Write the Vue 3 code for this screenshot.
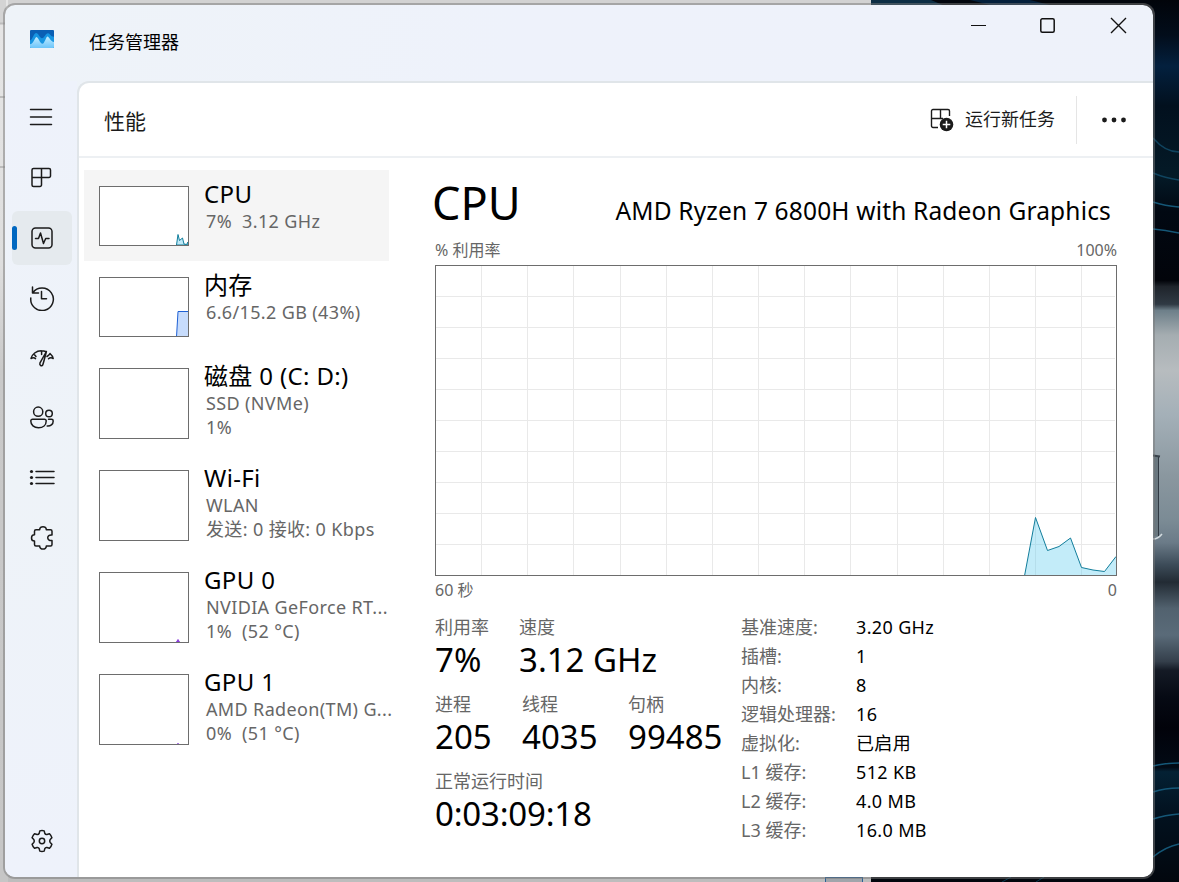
<script setup>
const devices = [
  { name: 'CPU', lines: ['7%  3.12 GHz'], kind: 'cpu', active: true },
  { name: '内存', lines: ['6.6/15.2 GB (43%)'], kind: 'mem' },
  { name: '磁盘 0 (C: D:)', lines: ['SSD (NVMe)', '1%'], tall: true },
  { name: 'Wi-Fi', lines: ['WLAN', '发送: 0 接收: 0 Kbps'], tall: true },
  { name: 'GPU 0', lines: ['NVIDIA GeForce RT...', '1%  (52 °C)'], kind: 'gpu', tall: true },
  { name: 'GPU 1', lines: ['AMD Radeon(TM) G...', '0%  (51 °C)'], kind: 'idle', tall: true },
]
const metricRows = [
  [{ label: '利用率', value: '7%', cls: 'w84' }, { label: '速度', value: '3.12 GHz', cls: 'auto' }],
  [{ label: '进程', value: '205', cls: 'w87' }, { label: '线程', value: '4035', cls: 'w106' }, { label: '句柄', value: '99485', cls: 'auto' }],
  [{ label: '正常运行时间', value: '0:03:09:18', cls: 'uptime' }],
]
const details = [
  ['基准速度:', '3.20 GHz'],
  ['插槽:', '1'],
  ['内核:', '8'],
  ['逻辑处理器:', '16'],
  ['虚拟化:', '已启用'],
  ['L1 缓存:', '512 KB'],
  ['L2 缓存:', '4.0 MB'],
  ['L3 缓存:', '16.0 MB'],
]
const gridX = Array.from({ length: 14 }, (_, i) => Math.round((i + 1) * 46.15) + 0.5)
const gridY = Array.from({ length: 9 }, (_, i) => (i + 1) * 31 + 0.5)
</script>

<template>
  <div class="desktop">
    <svg class="wallpaper" width="1179" height="882" viewBox="0 0 1179 882">
      <defs>
        <linearGradient id="side" x1="0" y1="0" x2="0" y2="1">
          <stop offset="0" stop-color="#01040a" />
          <stop offset=".04" stop-color="#020d1b" />
          <stop offset=".075" stop-color="#03203e" />
          <stop offset=".12" stop-color="#02101e" />
          <stop offset=".2" stop-color="#041a27" />
          <stop offset=".24" stop-color="#010812" />
          <stop offset=".318" stop-color="#02040a" />
          <stop offset=".325" stop-color="#1f242b" />
          <stop offset=".345" stop-color="#303a44" />
          <stop offset=".352" stop-color="#6d7f89" />
          <stop offset=".38" stop-color="#a5adb1" />
          <stop offset=".42" stop-color="#b7bcbf" />
          <stop offset=".47" stop-color="#a4b0b8" />
          <stop offset=".54" stop-color="#8a979f" />
          <stop offset=".59" stop-color="#7b8b95" />
          <stop offset=".615" stop-color="#6b7b88" />
          <stop offset=".64" stop-color="#3d4c59" />
          <stop offset=".66" stop-color="#222b34" />
          <stop offset=".69" stop-color="#52626f" />
          <stop offset=".72" stop-color="#5a6b79" />
          <stop offset=".75" stop-color="#343f4b" />
          <stop offset=".76" stop-color="#141a25" />
          <stop offset=".79" stop-color="#060a14" />
          <stop offset=".825" stop-color="#01020a" />
          <stop offset=".87" stop-color="#020a15" />
          <stop offset=".875" stop-color="#042134" />
          <stop offset=".92" stop-color="#021220" />
          <stop offset="1" stop-color="#02070e" />
        </linearGradient>
        <linearGradient id="left" x1="0" y1="0" x2="0" y2="1">
          <stop offset="0" stop-color="#e6e6e6" />
          <stop offset=".3" stop-color="#dedede" />
          <stop offset=".42" stop-color="#c9c9c9" />
          <stop offset="1" stop-color="#c6c6c6" />
        </linearGradient>
      </defs>
      <rect width="1179" height="882" fill="#bdbdbd" />
      <rect width="871" height="10" fill="#d2d2d2" />
      <rect width="8" height="882" fill="url(#left)" />
      <rect width="6" height="23" fill="#d4d4d4" />
      <path d="M0 23.5H6M0 97H6M0 167H6" stroke="#bcbcbc" stroke-width="2" />
      <rect x="871" width="308" height="882" fill="#02060d" />
      <path d="M871 0h60l14 6h-74z" fill="#0d2e44" />
      <path d="M970 0l20 5h60l-20-5z" fill="#04203b" />
      <rect x="1150" width="29" height="882" fill="url(#side)" />
      <g fill="none" stroke="#155777" stroke-width="1.4">
        <path d="M1153 138q12 14 26 14" opacity=".7" />
        <path d="M1153 173q12 5 26 7" opacity=".7" />
        <path d="M1153 202q12 4 26 5M1153 229q12 1 26 4" />
        <path d="M1153 766q12-3 26-3M1153 792q12-4 26-4M1153 819q12-4 26-5M1153 857q12-10 26-13" />
      </g>
      <rect x="1154" y="456" width="4" height="80" fill="#69777f" />
      <path d="M1158.500 456v80" stroke="#303943" />
      <path d="M1153 455.500l7 1" stroke="#3a444d" stroke-width="2" />
      <path d="M1153 539q5 0 9-5" fill="none" stroke="#d4dce0" stroke-width="1.500" />
      <rect x="825.500" y="877.500" width="37" height="8" fill="#a0a5ab" stroke="#2a6096" />
      <path d="M1002 882l9-5M1036 882l8-5" stroke="#0a3a50" />
    </svg>

    <div class="window">
      <header class="titlebar">
        <svg class="logo" width="24" height="18" viewBox="0 0 24 18">
          <defs>
            <linearGradient id="lg" x1="0" y1="0" x2="0" y2="1">
              <stop offset="0" stop-color="#c2ecff" />
              <stop offset="1" stop-color="#6cc5fa" />
            </linearGradient>
          </defs>
          <rect width="24" height="18" rx="1" fill="#0a5fb4" />
          <path d="M0 10.500C2.500 10 3.500 3.500 6 3C8.500 3 9.500 8 12 8.300C14.500 8 15.500 3.200 18 3.200C20 3.400 20.500 6.500 24 6.800V18H0z" fill="#1795e2" />
          <path d="M0 14.300C3.300 14.300 4.500 8 6.500 7C8.500 7.500 10 13.600 12.500 13.800C14.500 13.500 15.800 7.500 17.300 6.500C19.500 7 20.500 11.500 24 12V17a1 1 0 0 1-1 1H1a1 1 0 0 1-1-1z" fill="url(#lg)" />
        </svg>
        <span class="app-name">任务管理器</span>
        <svg class="controls" width="170" height="18" viewBox="0 0 170 18" fill="none" stroke="#111">
          <path d="M7 9.500H22" stroke-width="1.200" />
          <rect x="76.800" y="2.800" width="13.400" height="13.400" rx="1.500" stroke-width="1.500" />
          <path d="M147 2l15 15M162 2l-15 15" stroke-width="1.400" />
        </svg>
      </header>

      <div class="body">
        <nav class="rail">
          <div class="nav"><svg width="26" height="26" viewBox="0 0 26 26"><path d="M1.500 4.500H22.500M1.500 12H22.500M1.500 19.500H22.500" /></svg></div>
          <div class="nav"><svg width="26" height="26" viewBox="0 0 26 26"><path d="M4.500 3.500H20a1.500 1.500 0 0 1 1.500 1.500V11a1.500 1.500 0 0 1-1.500 1.500H3M12.500 3.500V20a1.500 1.500 0 0 1-1.500 1.500H4.500A1.500 1.500 0 0 1 3 20V5A1.500 1.500 0 0 1 4.500 3.500" /></svg></div>
          <div class="nav selected"><svg width="26" height="26" viewBox="0 0 26 26"><rect x="3" y="3" width="20" height="20" rx="3.500" /><path d="M6.500 13.500H9.500L11.500 8L14.500 18.500L16.700 13.500H20" /></svg></div>
          <div class="nav"><svg width="26" height="26" viewBox="0 0 26 26"><path d="M3.500 2V8H9.500M3.800 7.700A11.300 11.300 0 1 1 1.800 13M12.500 6.500V13.700H17.500" /></svg></div>
          <div class="nav"><svg width="26" height="26" viewBox="0 0 26 26"><path d="M2 13.500C2.800 9.500 7.500 5.500 12.500 5.700C14 5.700 15.500 6 16.600 6.500M2 13.500Q4.800 12 6.500 13.600M5.500 9.700L7 11.500M12.600 6V9.500M20.500 8.500M17.400 6.500L11 17.800Q10.400 19.500 11.500 20.500Q12.700 21.400 13.700 20Q14.500 18 17.400 6.500M18 11.500Q20.300 10 21 8.500Q23.800 11 24.200 13.500Q21.500 12 19.500 13.800" /></svg></div>
          <div class="nav"><svg width="26" height="26" viewBox="0 0 26 26"><circle cx="9.200" cy="6.700" r="4.600" /><circle cx="20" cy="8.500" r="3.300" /><path d="M3.500 14.300H15.500a1.700 1.700 0 0 1 1.700 1.700C17.200 20.100 14 22.800 9.500 22.800S1.800 20.100 1.800 16A1.700 1.700 0 0 1 3.500 14.300zM19.500 14.300H22.500a1.700 1.700 0 0 1 1.700 1.700C24.200 19.400 21.500 21.300 18.200 21" /></svg></div>
          <div class="nav"><svg width="26" height="26" viewBox="0 0 26 26"><path d="M7 6.500H25M7 12.500H25M7 18.500H25" /><g fill="#1b1b1b" stroke="none"><circle cx="2.500" cy="6.500" r="1.600" /><circle cx="2.500" cy="12.500" r="1.600" /><circle cx="2.500" cy="18.500" r="1.600" /></g></svg></div>
          <div class="nav"><svg width="26" height="26" viewBox="0 0 26 26"><path d="M7 4.800H10.700C10.500 .6 17.500 .6 17.300 4.800H21.500a1.500 1.500 0 0 1 1.500 1.500V10C17.300 9.300 17.300 16.200 23 15.500V19.500a1.500 1.500 0 0 1-1.500 1.500H17.300C17.500 25.100 10.500 25.100 10.700 21H7A1.500 1.500 0 0 1 5.500 19.500V16C1.500 16 1.500 9.800 5.500 9.800V6.300A1.500 1.500 0 0 1 7 4.800z" /></svg></div>
          <div class="nav settings"><svg width="26" height="26" viewBox="0 0 26 26"><circle cx="13" cy="13" r="2.700" /><path d="M10.800 2.900Q13 2.300 15.200 2.900L15.800 5.400Q16.400 6.700 17.900 6.500L20.500 5.700Q22.300 7.500 22.900 9.700L21.200 11.500Q20.200 13 21.200 14.500L22.900 16.300Q22.300 18.500 20.500 20.300L17.900 19.500Q16.400 19.300 15.800 20.600L15.200 23.100Q13 23.700 10.800 23.100L10.200 20.600Q9.600 19.300 8.100 19.500L5.500 20.300Q3.700 18.500 3.100 16.300L4.800 14.500Q5.800 13 4.800 11.500L3.100 9.700Q3.700 7.500 5.500 5.700L8.100 6.500Q9.600 6.700 10.200 5.400z" /></svg></div>
        </nav>

        <main class="panel">
          <div class="toolbar">
            <h1>性能</h1>
            <button class="run">
              <svg width="24" height="24" viewBox="0 0 24 24">
                <path d="M8 19.500H3A1.500 1.500 0 0 1 1.500 18V3A1.500 1.500 0 0 1 3 1.500H18A1.500 1.500 0 0 1 19.500 3V8M10.500 1.500V10.500M1.500 10.500H13" fill="none" stroke="#1b1b1b" stroke-width="1.400" />
                <circle cx="16.500" cy="16.500" r="6.800" fill="#1b1b1b" />
                <path d="M16.500 12.700v7.600M12.700 16.500h7.600" stroke="#fff" stroke-width="1.500" />
              </svg>
              <span>运行新任务</span>
            </button>
            <div class="divider"></div>
            <svg class="more" width="26" height="6" viewBox="0 0 26 6"><circle cx="2.500" cy="3" r="2.400" /><circle cx="12" cy="3" r="2.400" /><circle cx="21.500" cy="3" r="2.400" /></svg>
          </div>

          <div class="content">
            <div class="devices">
              <div v-for="d in devices" :key="d.name" class="device" :class="{ active: d.active, tall: d.tall }">
                <div class="thumb">
                  <svg v-if="d.kind === 'cpu'" width="88" height="58" viewBox="0 0 88 58"><path d="M76.500 58L78 47.500L79.500 53.500L82.500 51L84 57L86.500 57.500L88 55V58z" fill="#bfe9f8" stroke="#117d9b" /></svg>
                  <svg v-else-if="d.kind === 'mem'" width="88" height="58" viewBox="0 0 88 58"><path d="M76.500 59L78 33.500H89V59z" fill="#c7dcfc" stroke="#1e60d4" /></svg>
                  <svg v-else-if="d.kind === 'gpu'" width="88" height="69" viewBox="0 0 88 69"><path d="M76.500 69L78 66.500L79.500 69z" fill="#8a3fdc" stroke="#8a3fdc" /></svg>
                  <svg v-else-if="d.kind === 'idle'" width="88" height="69" viewBox="0 0 88 69"><path d="M77 68.500h2" stroke="#8a3fdc" stroke-opacity=".7" /></svg>
                </div>
                <div class="info">
                  <div class="name">{{ d.name }}</div>
                  <div v-for="l in d.lines" :key="l" class="line">{{ l }}</div>
                </div>
              </div>
            </div>

            <section class="detail">
              <div class="heading">
                <h2>CPU</h2>
                <span class="model">AMD Ryzen 7 6800H with Radeon Graphics</span>
              </div>
              <div class="axis top"><span>% 利用率</span><span>100%</span></div>
              <svg class="chart" width="682" height="311" viewBox="0 0 682 311">
                <path v-for="x in gridX" :key="'x' + x" :d="`M${x} 1V310`" stroke="#e9e9e9" />
                <path v-for="y in gridY" :key="'y' + y" :d="`M1 ${y}H680`" stroke="#e9e9e9" />
                <path d="M589.700 310L600.500 252.500L612.500 285.500L624 281.500L635.500 273L646.500 302.500L658 305L669.500 306.500L681 291.500V310z" fill="#5bcbf0" fill-opacity=".37" />
                <path d="M589.700 310L600.500 252.500L612.500 285.500L624 281.500L635.500 273L646.500 302.500L658 305L669.500 306.500L681 291.500" fill="none" stroke="#117d9b" />
                <rect x=".5" y=".5" width="681" height="310" fill="none" stroke="#6d6d6d" />
              </svg>
              <div class="axis bottom"><span>60 秒</span><span>0</span></div>
              <div class="stats">
                <div class="metrics">
                  <div v-for="(row, i) in metricRows" :key="i" class="metric-row">
                    <div v-for="m in row" :key="m.label" class="metric" :class="m.cls">
                      <div class="label">{{ m.label }}</div>
                      <div class="value">{{ m.value }}</div>
                    </div>
                  </div>
                </div>
                <dl class="specs">
                  <template v-for="s in details" :key="s[0]"><dt>{{ s[0] }}</dt><dd>{{ s[1] }}</dd></template>
                </dl>
              </div>
            </section>
          </div>
        </main>
      </div>
    </div>
  </div>
</template>

<style>
body { margin: 0; overflow: hidden; }
</style>

<style scoped>
* { box-sizing: border-box; }
.desktop { position: relative; width: 1179px; height: 882px; overflow: hidden; padding: 3px 0 0 3px; font-family: "Noto Sans", "Noto Sans CJK SC", sans-serif; color: #000; }
.wallpaper { position: absolute; left: 0; top: 0; }
.window { position: relative; width: 1152px; height: 876px; border: 2px solid rgba(120, 120, 120, .5); border-radius: 12px; overflow: hidden; background: linear-gradient(100deg, #eef3f8, #eef2fb 40%, #eef2fa); background-clip: padding-box; display: flex; flex-direction: column; }
.titlebar { height: 76px; display: flex; align-items: flex-start; flex: none; }
.logo { margin: 25px 0 0 25px; }
.app-name { margin: 24px 0 0 35px; font-size: 18px; line-height: 26px; flex: 1; }
.controls { margin: 11px 19px 0 0; }
.body { flex: 1; display: flex; min-height: 0; }
.rail { width: 72px; flex: none; padding: 10px 5px 9px 7px; display: flex; flex-direction: column; gap: 6px; background: linear-gradient(180deg, #eef2fb, #eef3f8 50%, #eef2fb); }
.nav { position: relative; height: 54px; flex: none; border-radius: 6px; display: flex; align-items: center; justify-content: center; }
.nav svg { fill: none; stroke: #1b1b1b; stroke-width: 1.5; stroke-linejoin: round; stroke-linecap: round; }
.nav.selected { background: #e5eaee; }
.nav.selected::before { content: ""; position: absolute; left: 0; top: 15px; width: 5px; height: 24px; border-radius: 3px; background: #0067c0; }
.settings { margin-top: auto; }
.panel { flex: 1; min-width: 0; border-left: 2px solid #e0e5e9; border-top: 2px solid #e0e5e9; border-top-left-radius: 12px; background: #fff; display: flex; flex-direction: column; }
.toolbar { height: 75px; border-bottom: 2px solid #edf0f3; display: flex; align-items: center; padding: 0 25px; flex: none; }
h1 { margin: 2px auto 0 0; font-size: 21px; font-weight: 400; line-height: 30px; color: #1b1b1b; }
.run { border: 0; padding: 0; background: none; display: flex; align-items: center; gap: 11px; font: inherit; font-size: 18px; line-height: 26px; color: #1b1b1b; }
.run span { margin-top: -1px; }
.divider { width: 1px; height: 48px; background: #e5e5e5; margin: 0 25px 0 21px; }
.more { fill: #1b1b1b; margin-top: 1px; }
.content { flex: 1; display: flex; }
.devices { width: 310px; flex: none; padding: 12px 0 0 5px; }
.device { height: 91px; padding: 16px 0 0 15px; display: flex; gap: 15px; }
.device.tall { height: 102px; }
.device.active { background: #f5f5f5; }
.thumb { width: 90px; height: 60px; border: 1px solid #6d6d6d; background: #fff; flex: none; overflow: hidden; }
.thumb svg { display: block; }
.tall .thumb { height: 71px; }
.info { margin-top: -8px; white-space: pre; }
.name { font-size: 24px; line-height: 32px; height: 31px; letter-spacing: .35px; }
.line { font-size: 18px; line-height: 24px; color: #666; padding-left: 2px; letter-spacing: .36px; }
.detail { margin-left: 46px; width: 682px; padding-top: 12px; }
.heading { height: 70px; display: flex; justify-content: space-between; align-items: baseline; }
h2 { margin: 0 0 0 -3px; font-size: 45px; font-weight: 400; line-height: 66px; }
.model { font-size: 24.500px; line-height: 34px; margin-right: 6px; white-space: nowrap; letter-spacing: .17px; }
.axis { display: flex; justify-content: space-between; font-size: 16px; line-height: 24px; color: #666; }
.axis.top { height: 25px; line-height: 20px; }
.axis.bottom { margin-top: 2px; }
.chart { display: block; }
.stats { display: flex; margin-top: 12px; }
.metrics { width: 306px; flex: none; }
.metric-row { display: flex; height: 77px; }
.metric { white-space: nowrap; }
.w84 { width: 84px; }
.w87 { width: 87px; }
.w106 { width: 106px; }
.label { font-size: 18px; line-height: 26px; color: #666; }
.value { font-size: 33px; line-height: 40px; }
.uptime .value { letter-spacing: -.2px; }
.specs { margin: 0; display: grid; grid-template-columns: 115px 1fr; grid-auto-rows: 29px; font-size: 18px; line-height: 26px; white-space: nowrap; }
dt { color: #666; }
dd { margin: 0; letter-spacing: .35px; }
</style>
